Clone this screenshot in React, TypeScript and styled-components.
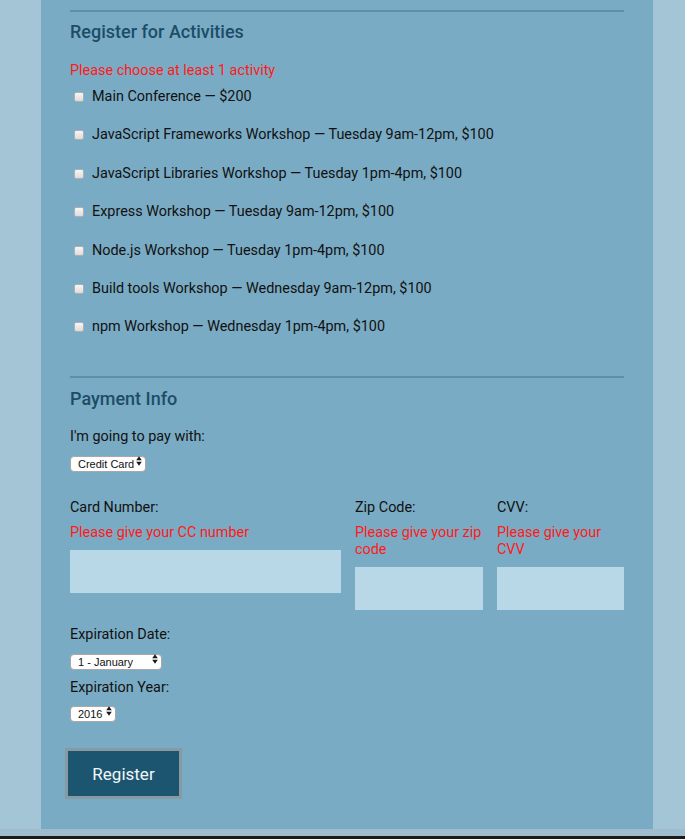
import React from "react";
import styled, { createGlobalStyle } from "styled-components";

const Global = createGlobalStyle`
  html, body { margin: 0; padding: 0; }
  body {
    background: #a4c5d6;
    font-family: Roboto, "Liberation Sans", sans-serif;
    color: #111;
    overflow: hidden;
  }
`;

const Page = styled.div`
  display: flex;
  flex-direction: column;
  align-items: center;
  min-height: 839px;
`;

const Main = styled.form`
  width: 612px;
  box-sizing: border-box;
  background: #7aabc4;
  padding: 10px 29px 33px 29px;
  display: flex;
  flex-direction: column;
  margin-left: 9px;
`;

const Rule = styled.hr<{ $top?: number }>`
  border: 0;
  height: 2px;
  background: #5b90a9;
  margin: ${(p) => p.$top ?? 0}px 0 0 0;
`;

const Heading = styled.h2<{ $top: number }>`
  font-size: 18px;
  font-weight: 500;
  line-height: 22px;
  color: #1c4d68;
  margin: ${(p) => p.$top}px 0 0 0;
`;

const Error = styled.div<{ $top: number }>`
  color: #ff1a1a;
  font-size: 14.4px;
  line-height: 17px;
  margin-top: ${(p) => p.$top}px;
`;

const ActivityList = styled.div`
  display: flex;
  flex-direction: column;
  gap: 18.4px;
  margin-top: 8px;
`;

const CheckRow = styled.label`
  display: flex;
  align-items: center;
  gap: 8px;
  font-size: 14.4px;
  line-height: 20px;
  color: #111;
`;

const Check = styled.input`
  appearance: none;
  -webkit-appearance: none;
  margin: 0 0 0 4px;
  width: 10px;
  height: 10px;
  border: 1px solid #a9b1b5;
  border-radius: 2px;
  background: linear-gradient(#f6f6f6, #dcdcdc);
  box-sizing: border-box;
`;

const Label = styled.label<{ $top: number }>`
  display: block;
  font-size: 14.4px;
  line-height: 20px;
  color: #111;
  margin-top: ${(p) => p.$top}px;
`;

const SelectWrap = styled.span<{ $top: number; $w: number }>`
  position: relative;
  display: block;
  width: ${(p) => p.$w}px;
  height: 16px;
  margin-top: ${(p) => p.$top}px;
`;

const Select = styled.select`
  appearance: none;
  -webkit-appearance: none;
  width: 100%;
  height: 16px;
  box-sizing: border-box;
  border: 1px solid #a8a8a8;
  border-radius: 4px;
  background: #fff;
  font-family: "Liberation Sans", Arial, sans-serif;
  font-size: 11px;
  line-height: 14px;
  padding: 0 0 0 7px;
  color: #111;
`;

const Arrows = styled.svg`
  position: absolute;
  right: 4px;
  top: 3px;
  width: 6px;
  height: 10px;
  pointer-events: none;
`;

const CardGrid = styled.div`
  display: grid;
  grid-template-columns: 271px 128px 127px;
  column-gap: 14px;
  margin-top: 29px;
`;

const Field = styled.div`
  display: flex;
  flex-direction: column;
`;

const FieldLabel = styled.label`
  font-size: 14.4px;
  line-height: 20px;
  color: #111;
`;

const TextInput = styled.input`
  border: 0;
  background: #b8d8e8;
  height: 43px;
  width: 100%;
  margin-top: 9px;
  box-sizing: border-box;
  outline: none;
`;

const Button = styled.button`
  align-self: flex-start;
  margin: 32px 0 0 -2px;
  width: 111px;
  height: 45px;
  background: #1c5570;
  color: #f2f6f8;
  font-family: Roboto, "Liberation Sans", sans-serif;
  font-size: 17px;
  border: 0;
  outline: 3px solid #8799a2;
  outline-offset: 0;
  padding: 0;
`;

const FooterStrip = styled.div`
  width: 100%;
  height: 7px;
  background: #9ebccb;
`;

const EdgeLine = styled.div`
  width: 100%;
  height: 3px;
  background: #1a1a1a;
`;

const Spacer = styled.div`
  flex: 1;
`;

function Sel({ top, w, children }: { top: number; w: number; children: React.ReactNode }) {
  return (
    <SelectWrap $top={top} $w={w}>
      <Select>{children}</Select>
      <Arrows viewBox="0 0 6 10">
        <path d="M3 0.3 L5.8 4.2 L0.2 4.2 Z M3 9.7 L5.8 5.8 L0.2 5.8 Z" fill="#1a1a1a" />
      </Arrows>
    </SelectWrap>
  );
}

const activities = [
  "Main Conference — $200",
  "JavaScript Frameworks Workshop — Tuesday 9am-12pm, $100",
  "JavaScript Libraries Workshop — Tuesday 1pm-4pm, $100",
  "Express Workshop — Tuesday 9am-12pm, $100",
  "Node.js Workshop — Tuesday 1pm-4pm, $100",
  "Build tools Workshop — Wednesday 9am-12pm, $100",
  "npm Workshop — Wednesday 1pm-4pm, $100",
];

export default function App() {
  return (
    <>
      <Global />
      <Page>
        <Main onSubmit={(e) => e.preventDefault()}>
          <Rule />
          <Heading $top={9}>Register for Activities</Heading>
          <Error $top={19}>Please choose at least 1 activity</Error>
          <ActivityList>
            {activities.map((a) => (
              <CheckRow key={a}>
                <Check type="checkbox" />
                {a}
              </CheckRow>
            ))}
          </ActivityList>
          <Rule $top={39} />
          <Heading $top={10}>Payment Info</Heading>
          <Label $top={17}>I'm going to pay with:</Label>
          <Sel top={6} w={76}>
            <option>Credit Card</option>
          </Sel>
          <CardGrid>
            <Field>
              <FieldLabel>Card Number:</FieldLabel>
              <Error $top={6}>Please give your CC number</Error>
              <TextInput />
            </Field>
            <Field>
              <FieldLabel>Zip Code:</FieldLabel>
              <Error $top={6}>Please give your zip code</Error>
              <TextInput />
            </Field>
            <Field>
              <FieldLabel>CVV:</FieldLabel>
              <Error $top={6}>Please give your CVV</Error>
              <TextInput />
            </Field>
          </CardGrid>
          <Label $top={15}>Expiration Date:</Label>
          <Sel top={6} w={92}>
            <option>1 - January</option>
          </Sel>
          <Label $top={11}>Expiration Year:</Label>
          <Sel top={5} w={46}>
            <option>2016</option>
          </Sel>
          <Button type="submit">Register</Button>
        </Main>
        <FooterStrip />
        <Spacer />
        <EdgeLine />
      </Page>
    </>
  );
}
